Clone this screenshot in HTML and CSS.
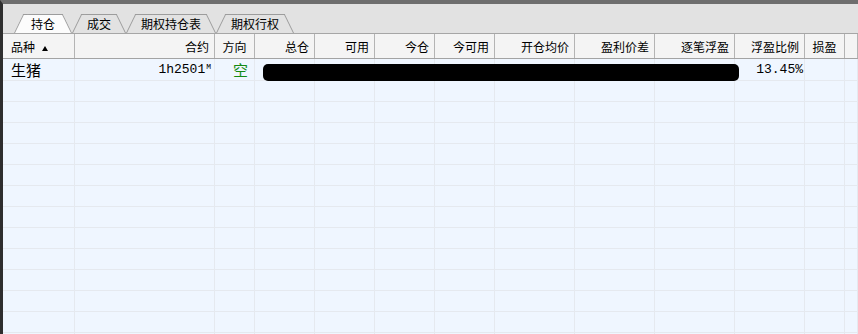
FILE: index.html
```html
<!DOCTYPE html>
<html lang="zh-CN">
<head>
    <meta charset="UTF-8">
    <meta name="viewport" content="width=device-width, initial-scale=1.0">
    <title>持仓</title>
    <link rel="stylesheet" href="styles.css">
</head>
<body>
    <div class="window">
        <div class="tabbar">
            <div class="tab active">持仓</div>
            <div class="tab">成交</div>
            <div class="tab">期权持仓表</div>
            <div class="tab">期权行权</div>
        </div>

        <div class="grid">
            <div class="row head">
                <div class="cell left">品种<span class="sort"></span></div>
                <div class="cell">合约</div>
                <div class="cell center">方向</div>
                <div class="cell">总仓</div>
                <div class="cell">可用</div>
                <div class="cell">今仓</div>
                <div class="cell">今可用</div>
                <div class="cell">开仓均价</div>
                <div class="cell">盈利价差</div>
                <div class="cell">逐笔浮盈</div>
                <div class="cell">浮盈比例</div>
                <div class="cell center">损盈</div>
                <div class="cell"></div>
            </div>

            <div class="row first">
                <div class="cell left name">生猪</div>
                <div class="cell mono code">1h2501<sup>M</sup></div>
                <div class="cell dir">空</div>
                <div class="cell"></div>
                <div class="cell"></div>
                <div class="cell"></div>
                <div class="cell"></div>
                <div class="cell"></div>
                <div class="cell"></div>
                <div class="cell"></div>
                <div class="cell mono pct">13.45%</div>
                <div class="cell"></div>
                <div class="cell"></div>
                <div class="mask"></div>
            </div>
        </div>
    </div>

    <script>
        // fill the rest of the grid with empty rows
        const grid = document.querySelector('.grid');
        for (let i = 0; i < 13; i++) {
            const row = document.createElement('div');
            row.className = 'row';
            for (let c = 0; c < 13; c++) {
                const cell = document.createElement('div');
                cell.className = 'cell';
                row.appendChild(cell);
            }
            grid.appendChild(row);
        }
    </script>
</body>
</html>
```

FILE: styles.css
```css
body {
    margin: 0;
    background-color: #eff6ff;
    font-family: "Noto Sans CJK SC", "DejaVu Sans", sans-serif;
    color: #000;
}

.window {
    height: 334px;
    box-sizing: border-box;
    border-top: 4px solid #6e6e6e;
    border-left: 3px solid #2e2e2e;
    overflow: hidden;
    display: flex;
    flex-direction: column;
}

/* tab strip */
.tabbar {
    height: 30px;
    flex-shrink: 0;
    box-sizing: border-box;
    background-color: #e2e2e2;
    border-bottom: 1px solid #a6a6a6;
    display: flex;
    align-items: flex-end;
    padding-left: 11px;
}

.tab {
    position: relative;
    z-index: 0;
    height: 19px;
    line-height: 18px;
    padding: 1px 15px 0;
    box-sizing: border-box;
    font-size: 12px;
}

.tab::before,
.tab::after {
    content: "";
    position: absolute;
    top: 0;
    bottom: 0;
    width: 60%;
    z-index: -1;
    background-color: #e2e2e2;
    border-top: 1px solid #9c9c9c;
    box-sizing: border-box;
}

.tab::before {
    left: 0;
    border-left: 1px solid #9c9c9c;
    transform-origin: bottom left;
    transform: skewX(-26deg);
}

.tab::after {
    right: 0;
    border-right: 1px solid #9c9c9c;
    transform-origin: bottom right;
    transform: skewX(26deg);
}

.tab.active {
    z-index: 1;
    padding: 1px 17px 0;
}

.tab.active::before,
.tab.active::after {
    background-color: #fcfcfc;
}

/* grid */
.grid {
    flex: 1;
    overflow: hidden;
}

.row {
    position: relative;
    display: grid;
    grid-template-columns: 72px 140px 40px 60px 60px 60px 60px 80px 80px 80px 70px 40px 1fr;
    height: 21px;
    box-sizing: border-box;
    border-bottom: 1px solid #e5e9ef;
}

.row.first {
    height: 22px;
}

.cell {
    border-right: 1px solid #e5e9ef;
    text-align: right;
    padding: 0 5px;
    white-space: nowrap;
    overflow: hidden;
    font-size: 15px;
    line-height: 20px;
}

.cell.left {
    text-align: left;
    padding-left: 8px;
}

.cell.center {
    text-align: center;
    padding: 0;
}

.row.head {
    height: 25px;
    background-color: #f4f4f4;
    border-bottom: 1px solid #a3a3a3;
}

.row.head .cell {
    border-right-color: #b4b4b4;
    font-size: 12px;
    line-height: 22px;
    padding-top: 2px;
}

.row.head .cell.center {
    padding: 2px 0 0;
}

.sort {
    display: inline-block;
    margin-left: 7px;
    vertical-align: 1px;
    border-left: 3px solid transparent;
    border-right: 3px solid transparent;
    border-bottom: 5px solid #000;
}

.row.first .cell {
    line-height: 21px;
}

.mono {
    font-family: "Liberation Mono", monospace;
    font-size: 13px;
}

.code {
    padding-right: 3px;
}

.code sup {
    font-size: 8px;
    vertical-align: top;
    line-height: 16px;
    margin-left: 1px;
}

.dir {
    text-align: left;
    padding-left: 18px;
    color: #138a13;
}

.pct {
    padding-right: 1px;
}

/* redaction over the hidden columns */
.mask {
    position: absolute;
    left: 260px;
    top: 5px;
    width: 476px;
    height: 17px;
    background-color: #000;
    border-radius: 5px;
}
```
